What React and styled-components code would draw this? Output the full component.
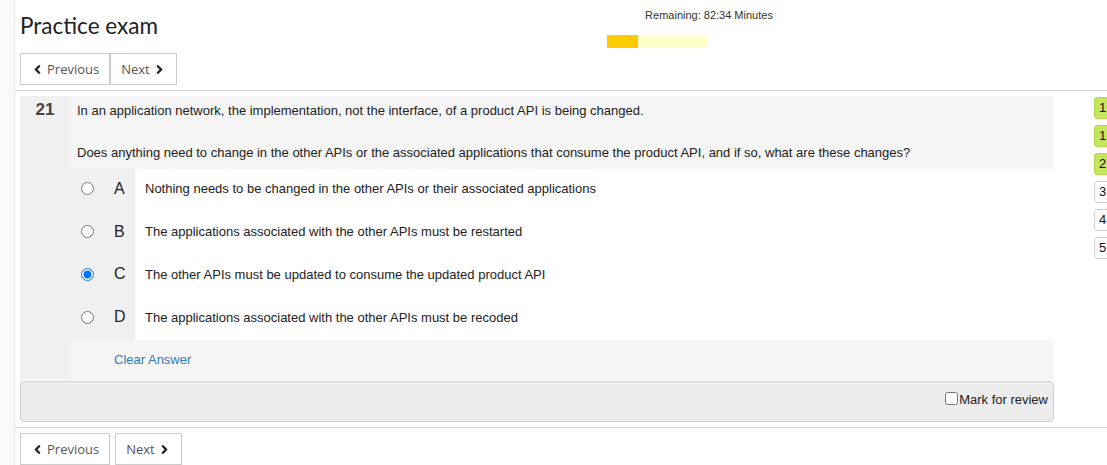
import React, { useState } from "react";
import styled, { createGlobalStyle } from "styled-components";
import { ChevronLeft, ChevronRight } from "lucide-react";

const GlobalStyle = createGlobalStyle`
  html, body {
    margin: 0;
    padding: 0;
    background: #fff;
    overflow: hidden;
  }
  body {
    font-family: "Liberation Sans", Arial, sans-serif;
    color: #222;
  }
`;

const options = [
  { letter: "A", text: "Nothing needs to be changed in the other APIs or their associated applications" },
  { letter: "B", text: "The applications associated with the other APIs must be restarted" },
  { letter: "C", text: "The other APIs must be updated to consume the updated product API" },
  { letter: "D", text: "The applications associated with the other APIs must be recoded" },
];

const navItems = [
  { label: "1", answered: true },
  { label: "1", answered: true },
  { label: "2", answered: true },
  { label: "3", answered: false },
  { label: "4", answered: false },
  { label: "5", answered: false },
];

function Pager({ joined }) {
  return (
    <ButtonGroup $joined={joined}>
      <PageButton $joined={joined}>
        <ChevronLeft size={13} strokeWidth={4.5} />
        Previous
      </PageButton>
      <PageButton $joined={joined}>
        Next
        <ChevronRight size={13} strokeWidth={4.5} />
      </PageButton>
    </ButtonGroup>
  );
}

export default function App() {
  const [answer, setAnswer] = useState("C");
  const [review, setReview] = useState(false);
  const elapsed = 31;

  return (
    <>
      <GlobalStyle />
      <Page>
        <SideStrip />
        <Main>
          <Header>
            <TitleBlock>
              <Title>Practice exam</Title>
              <Pager joined />
            </TitleBlock>
            <Timer>
              <TimerText>Remaining: 82:34 Minutes</TimerText>
              <TimerBar>
                <TimerFill style={{ width: `${elapsed}%` }} />
              </TimerBar>
            </Timer>
          </Header>

          <Divider />

          <Body>
            <QuestionColumn>
              <QuestionPanel>
                <Number>21</Number>
                <QuestionContent>
                  <Stem>
                    <p>In an application network, the implementation, not the interface, of a product API is being changed.</p>
                    <p>Does anything need to change in the other APIs or the associated applications that consume the product API, and if so, what are these changes?</p>
                  </Stem>
                  {options.map((o) => (
                    <OptionRow key={o.letter}>
                      <OptionControl>
                        <Radio
                          type="radio"
                          name="q21"
                          checked={answer === o.letter}
                          onChange={() => setAnswer(o.letter)}
                        />
                        <Letter>{o.letter}</Letter>
                      </OptionControl>
                      <OptionText>{o.text}</OptionText>
                    </OptionRow>
                  ))}
                  <ClearRow>
                    <ClearLink onClick={() => setAnswer(null)}>Clear Answer</ClearLink>
                  </ClearRow>
                </QuestionContent>
              </QuestionPanel>

              <ReviewBar>
                <ReviewLabel>
                  <Checkbox
                    type="checkbox"
                    checked={review}
                    onChange={(e) => setReview(e.target.checked)}
                  />
                  Mark for review
                </ReviewLabel>
              </ReviewBar>
            </QuestionColumn>

            <Nav>
              {navItems.map((n, i) => (
                <NavItem key={i} $answered={n.answered}>
                  {n.label}
                </NavItem>
              ))}
            </Nav>
          </Body>

          <Divider $bottom />

          <Footer>
            <Pager />
          </Footer>
        </Main>
      </Page>
    </>
  );
}

const Page = styled.div`
  display: flex;
  min-height: 465px;
  width: 1107px;
  overflow: hidden;
`;

const SideStrip = styled.div`
  width: 14px;
  flex-shrink: 0;
  background: #f8f9fa;
  border-right: 1px solid #e6e6e6;
`;

const Main = styled.div`
  flex: 1;
  min-width: 0;
`;

const Header = styled.div`
  display: flex;
  padding-left: 5px;
  height: 90px;
`;

const TitleBlock = styled.div`
  width: 587px;
  padding-top: 9px;
`;

const Title = styled.h1`
  margin: 0 0 10px;
  font-family: Lato, "Open Sans", sans-serif;
  font-weight: 400;
  font-size: 22.5px;
  line-height: 34px;
  color: #222;
`;

const ButtonGroup = styled.div`
  display: flex;
  gap: ${(p) => (p.$joined ? "0" : "5px")};
`;

const PageButton = styled.button`
  display: flex;
  align-items: center;
  gap: 3px;
  height: 32px;
  padding: 0 10px;
  background: #fff;
  border: 1px solid #ccc;
  border-radius: 0;
  font-family: "Open Sans", sans-serif;
  font-size: 13px;
  color: #555;
  cursor: pointer;

  svg {
    color: #222;
  }

  & + & {
    margin-left: ${(p) => (p.$joined ? "-1px" : "0")};
  }
`;

const Timer = styled.div`
  width: 204px;
  padding-top: 8px;
`;

const TimerText = styled.div`
  text-align: center;
  font-size: 11px;
  line-height: 14px;
  color: #333;
`;

const TimerBar = styled.div`
  margin-top: 13px;
  width: 100px;
  height: 13px;
  background: #ffffcc;
`;

const TimerFill = styled.div`
  height: 100%;
  background: #ffcc00;
`;

const Divider = styled.div`
  height: 1px;
  background: #d6d6d6;
  margin-top: ${(p) => (p.$bottom ? "5px" : "0")};
  margin-bottom: 5px;
`;

const Body = styled.div`
  display: flex;
  padding-left: 5px;
`;

const QuestionColumn = styled.div`
  width: 1034px;
  flex-shrink: 0;
`;

const QuestionPanel = styled.div`
  display: flex;
  background: #f0f0f0;
`;

const Number = styled.div`
  width: 50px;
  flex-shrink: 0;
  padding-top: 4px;
  text-align: center;
  font-weight: 700;
  font-size: 17px;
  line-height: 20px;
  color: #444;
`;

const QuestionContent = styled.div`
  flex: 1;
`;

const Stem = styled.div`
  background: #f5f5f5;
  padding: 7px 7px 9px;
  font-size: 13px;
  line-height: 15px;

  p {
    margin: 0;
  }

  p + p {
    margin-top: 27px;
  }
`;

const OptionRow = styled.div`
  display: flex;
  height: 42.75px;
`;

const OptionControl = styled.label`
  width: 65px;
  flex-shrink: 0;
  display: flex;
  align-items: center;
  padding-bottom: 3px;
  box-sizing: border-box;
`;

const Radio = styled.input`
  margin: 0 0 0 11px;
  width: 13px;
  height: 13px;
`;

const Letter = styled.span`
  margin-left: 20px;
  font-size: 16px;
  color: #222;
`;

const OptionText = styled.div`
  flex: 1;
  background: #fff;
  display: flex;
  align-items: center;
  padding: 0 0 3px 10px;
  font-size: 13px;
`;

const ClearRow = styled.div`
  height: 40px;
  box-sizing: border-box;
  background: #f5f5f5;
  display: flex;
  align-items: center;
  padding: 0 0 2px 44px;
`;

const ClearLink = styled.a`
  font-size: 13px;
  color: #337ab7;
  cursor: pointer;
`;

const ReviewBar = styled.div`
  margin-top: 1px;
  height: 39px;
  background: #ececec;
  border: 1px solid #d0d0d0;
  border-radius: 4px;
  display: flex;
  justify-content: flex-end;
  align-items: center;
  padding-right: 5px;
`;

const ReviewLabel = styled.label`
  display: flex;
  align-items: center;
  font-size: 13px;
  color: #222;
  margin-bottom: 4px;
`;

const Checkbox = styled.input`
  margin: 0 1px 3px 0;
  width: 13px;
  height: 13px;
`;

const Nav = styled.div`
  margin-left: 40px;
  display: flex;
  flex-direction: column;
  gap: 6px;
  padding-top: 1px;
`;

const NavItem = styled.div`
  width: 30px;
  height: 20px;
  border: 1px solid ${(p) => (p.$answered ? "#b5d94a" : "#cfcfcf")};
  border-radius: 3px;
  background: ${(p) => (p.$answered ? "#c4e55c" : "#fff")};
  font-size: 13px;
  line-height: 20px;
  padding-left: 4px;
  color: #111;
`;

const Footer = styled.div`
  padding-left: 5px;
`;
